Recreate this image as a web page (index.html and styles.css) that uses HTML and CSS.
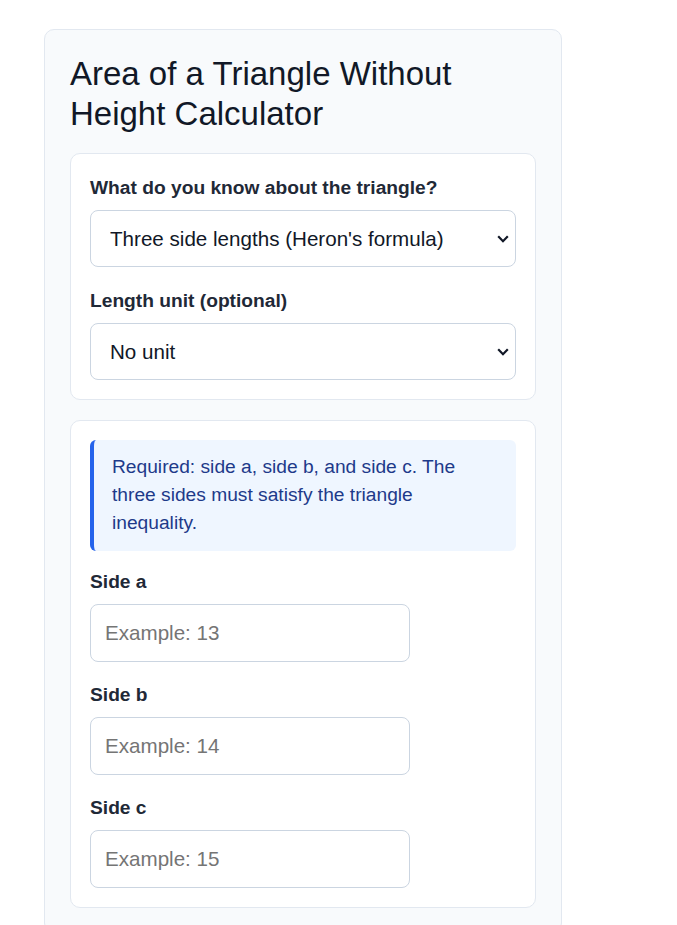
FILE: index.html
```html
<!DOCTYPE html>
<html>
<head>
<meta charset="utf-8">
<title>Area of a Triangle Without Height Calculator</title>
<link rel="stylesheet" href="styles.css">
</head>
<body>
<div class="calculator">
    <h1>Area of a Triangle Without Height Calculator</h1>

    <div class="card options">
        <div class="field">
            <label for="method">What do you know about the triangle?</label>
            <select id="method">
                <option>Three side lengths (Heron's formula)</option>
                <option>Two sides and the included angle</option>
                <option>Coordinates of the three vertices</option>
            </select>
        </div>
        <div class="field">
            <label for="unit">Length unit (optional)</label>
            <select id="unit">
                <option>No unit</option>
                <option>mm</option>
                <option>cm</option>
                <option>m</option>
                <option>in</option>
                <option>ft</option>
            </select>
        </div>
    </div>

    <div class="card">
        <div class="info">
            Required: side a, side b, and side c. The three sides must satisfy the triangle inequality.
        </div>
        <div class="field">
            <label for="sideA">Side a</label>
            <input id="sideA" type="text" placeholder="Example: 13">
        </div>
        <div class="field">
            <label for="sideB">Side b</label>
            <input id="sideB" type="text" placeholder="Example: 14">
        </div>
        <div class="field">
            <label for="sideC">Side c</label>
            <input id="sideC" type="text" placeholder="Example: 15">
        </div>
    </div>
</div>
</body>
</html>
```

FILE: styles.css
```css
body {
    margin: 0;
    background-color: white;
    font-family: "Liberation Sans", Arial, sans-serif;
    color: #1f2937;
}
.calculator {
    box-sizing: border-box;
    width: 518px;
    margin: 29px 0 0 44px;
    padding: 24px 25px;
    background-color: #f8fafc;
    border: 1px solid #e2e8f0;
    border-radius: 10px;
}
h1 {
    margin: 0 0 19px 0;
    font-size: 33px;
    font-weight: normal;
    line-height: 40px;
    color: #111827;
}
.card {
    background-color: white;
    border: 1px solid #e2e8f0;
    border-radius: 10px;
    padding: 19px;
}
.card + .card {
    margin-top: 20px;
}
.field + .field {
    margin-top: 18px;
}
.options .field + .field {
    margin-top: 19px;
}
label {
    display: block;
    margin-bottom: 8px;
    font-size: 19.2px;
    font-weight: bold;
    line-height: 29px;
    color: #1f2937;
}
select {
    display: block;
    box-sizing: border-box;
    width: 100%;
    height: 57px;
    padding: 0 36px 0 19px;
    font-family: inherit;
    font-size: 20.6px;
    color: #111827;
    background-color: white;
    border: 1px solid #cbd5e1;
    border-radius: 8px;
    appearance: none;
    -webkit-appearance: none;
    background-image: url("data:image/svg+xml,%3Csvg xmlns='http://www.w3.org/2000/svg' width='12' height='8' viewBox='0 0 12 8'%3E%3Cpath d='M1.2 1.3 L6 6.2 L10.8 1.3' fill='none' stroke='%23111827' stroke-width='2.2'/%3E%3C/svg%3E");
    background-repeat: no-repeat;
    background-position: right 6px center;
    background-size: 12px 8px;
}
input {
    display: block;
    box-sizing: border-box;
    width: 320px;
    height: 58px;
    padding: 0 14px;
    font-family: inherit;
    font-size: 20.6px;
    color: #111827;
    border: 1px solid #cbd5e1;
    border-radius: 8px;
    outline: none;
}
input::placeholder {
    color: #757575;
}
.info {
    margin-bottom: 16px;
    padding: 13px 18px 14px 18px;
    background-color: #eff6ff;
    border-left: 4px solid #2563eb;
    border-radius: 6px;
    font-size: 19.2px;
    line-height: 28px;
    color: #1e3a8a;
}
```
